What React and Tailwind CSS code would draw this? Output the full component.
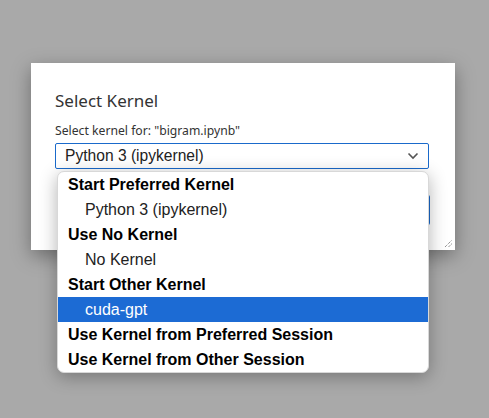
import React from 'react';

const rows = [
  { label: 'Start Preferred Kernel', header: true },
  { label: 'Python 3 (ipykernel)' },
  { label: 'Use No Kernel', header: true },
  { label: 'No Kernel' },
  { label: 'Start Other Kernel', header: true },
  { label: 'cuda-gpt', active: true },
  { label: 'Use Kernel from Preferred Session', header: true },
  { label: 'Use Kernel from Other Session', header: true },
];

const App = () => {
  return (
    <div className="relative w-[489px] h-[418px] overflow-hidden bg-[#a9a9a9] pt-[63px] pl-[31px]">
      {/* dialog */}
      <div className="relative w-[424px] h-[187px] bg-white shadow-[0_6px_18px_rgba(0,0,0,0.35)] px-6 pt-[27px] font-['Noto_Sans',sans-serif] text-[#333]">
        <h2 className="text-[17px] leading-[22px] font-normal">Select Kernel</h2>
        <p className="mt-[11px] text-[12.2px] leading-[16px]">Select kernel for: "bigram.ipynb"</p>
        <div className="mt-[4px] flex items-center justify-between h-[26px] w-[374px] border border-[#1a6acb] rounded-[2px] pl-[9px] pr-[9px] font-['Liberation_Sans',Arial,sans-serif] text-[15.6px] text-[#222]">
          <span>Python 3 (ipykernel)</span>
          <svg width="12" height="8" viewBox="0 0 12 8" fill="none" stroke="#555" strokeWidth="1.6">
            <path d="M1.5 1.5 L6 6 L10.5 1.5" />
          </svg>
        </div>
        <div className="mt-[26px] flex justify-end w-[375px]">
          <div className="h-[30px] w-[70px] bg-[#1a6acb] rounded-[2px]" />
        </div>
        {/* resize grip */}
        <svg className="absolute right-[2px] bottom-[2px]" width="9" height="9" viewBox="0 0 9 9" stroke="#666" strokeWidth="1" strokeDasharray="1 1">
          <path d="M1 8 L8 1" />
          <path d="M4.5 8 L8 4.5" />
        </svg>
      </div>

      {/* dropdown menu */}
      <div className="absolute left-[57px] top-[171px] w-[372px] bg-white rounded-[7px] border border-[#d8d8d8] shadow-[0_4px_18px_rgba(0,0,0,0.3)] overflow-hidden font-['Liberation_Sans',Arial,sans-serif] text-[16px] text-black">
        {rows.map((r) => (
          <div
            key={r.label}
            className={
              r.active
                ? 'h-[25px] leading-[25px] pl-[27px] bg-[#1c6bd4] text-white'
                : r.header
                ? 'h-[25px] leading-[25px] pl-[10px] font-bold'
                : 'h-[25px] leading-[25px] pl-[27px] text-[#222]'
            }
          >
            {r.label}
          </div>
        ))}
      </div>
    </div>
  );
};

export default App;
